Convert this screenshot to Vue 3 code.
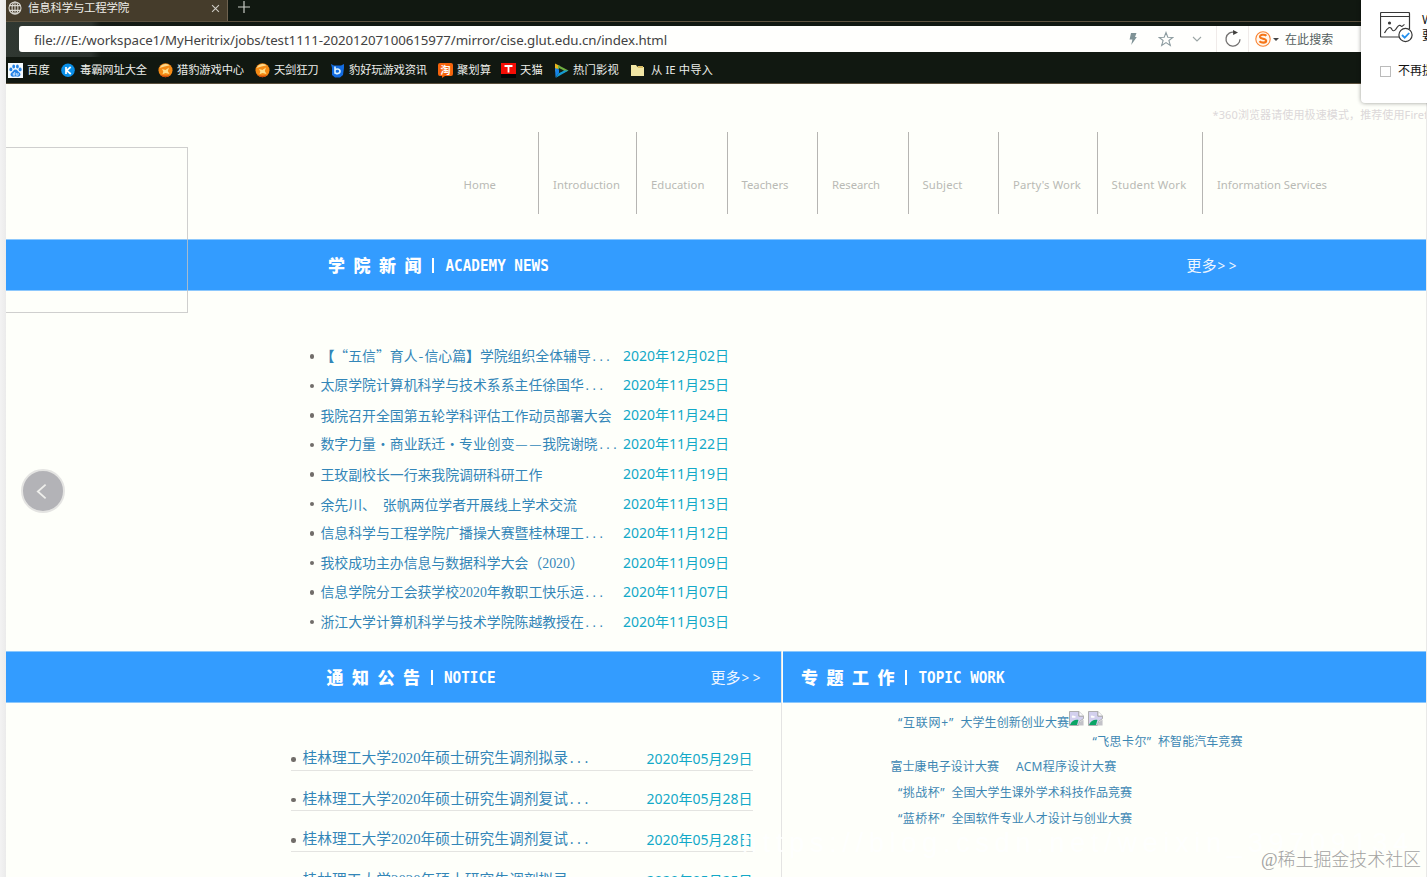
<script setup>
// Spreads a line of text over a given width by adjusting its letter spacing.
const vFit = {
  mounted(el, { value }) {
    if (!value) return
    const natural = el.getBoundingClientRect().width
    const n = [...el.textContent].length
    el.style.letterSpacing = (value - natural) / n + 'px'
  }
}

const bookmarks = [
  { icon: 'baidu', label: '百度', w: 53, t: 23 },
  { icon: 'k', label: '毒霸网址大全', w: 97, t: 67 },
  { icon: 'ball', label: '猎豹游戏中心', w: 97, t: 67 },
  { icon: 'ball', label: '天剑狂刀', w: 75, t: 44.5 },
  { icon: 'b', label: '豹好玩游戏资讯', w: 108, t: 78 },
  { icon: 'tao', label: '聚划算', w: 63, t: 34 },
  { icon: 't', label: '天猫', w: 53, t: 23 },
  { icon: 'play', label: '热门影视', w: 76, t: 46 },
  { icon: 'folder', label: '从 IE 中导入', w: 100, t: 62 }
]

const nav = [
  { label: 'Home', w: 90, t: 32.5 },
  { label: 'Introduction', w: 98, t: 67 },
  { label: 'Education', w: 90.5, t: 53.5 },
  { label: 'Teachers', w: 90.5, t: 47 },
  { label: 'Research', w: 90.5, t: 48 },
  { label: 'Subject', w: 90.5, t: 40 },
  { label: 'Party\'s Work', w: 98.5, t: 68 },
  { label: 'Student Work', w: 105.5, t: 75 },
  { label: 'Information Services', w: 150, t: 110 }
]

// Splits a headline into runs, each with the class that sets its width.
const kind = (t) => {
  if (/^[0-9]/.test(t)) return 'num'
  if (t[0] === '.') return 'dots'
  if (t === '·' || t === '—') return 'mid'
  if (t === '“') return 'open'
  if (t === '”') return 'shut'
  if (t === '-' || t === ' ') return 'half'
  if (t === '【' || t === '】') return 'han strong'
  return 'han'
}
const runs = (s) =>
  (s.match(/[0-9]+|\.+|[·\- —“”【】]|[^0-9.·\- —“”【】]+/g) || []).map((t) => ({ t, c: kind(t) }))

const news = [
  ['【“五信”育人-信心篇】学院组织全体辅导...', '2020年12月02日'],
  ['太原学院计算机科学与技术系系主任徐国华...', '2020年11月25日'],
  ['我院召开全国第五轮学科评估工作动员部署大会', '2020年11月24日'],
  ['数字力量·商业跃迁·专业创变——我院谢晓...', '2020年11月22日'],
  ['王玫副校长一行来我院调研科研工作', '2020年11月19日'],
  ['余先川、 张帆两位学者开展线上学术交流', '2020年11月13日'],
  ['信息科学与工程学院广播操大赛暨桂林理工...', '2020年11月12日'],
  ['我校成功主办信息与数据科学大会（2020）', '2020年11月09日'],
  ['信息学院分工会获学校2020年教职工快乐运...', '2020年11月07日'],
  ['浙江大学计算机科学与技术学院陈越教授在...', '2020年11月03日']
].map(([title, date]) => ({ runs: runs(title), date }))

const notices = [
  ['桂林理工大学2020年硕士研究生调剂拟录...', '2020年05月29日'],
  ['桂林理工大学2020年硕士研究生调剂复试...', '2020年05月28日'],
  ['桂林理工大学2020年硕士研究生调剂复试...', '2020年05月28日'],
  ['桂林理工大学2020年硕士研究生调剂拟录...', '2020年05月25日']
].map(([title, date]) => ({ runs: runs(title), date }))
</script>

<template>
  <div class="screen">
    <div class="gutter"></div>
    <div class="window">
      <div class="tabs">
        <div class="tab">
          <svg class="globe" viewBox="0 0 14 14" fill="none" stroke="#d8d6cf" stroke-width="1.1">
            <circle cx="7" cy="7" r="6" /><ellipse cx="7" cy="7" rx="2.9" ry="6" />
            <path d="M1.5 4.6h11M1.5 9.4h11M7 1v12" />
          </svg>
          <span class="tab-title"><span v-fit="101">信息科学与工程学院</span></span>
          <svg class="close" viewBox="0 0 10 10" stroke="#d0cdc6" stroke-width="1.2"><path d="M1.2 1.2l7.6 7.6M8.8 1.2L1.2 8.8" /></svg>
        </div>
        <svg class="plus" viewBox="0 0 12 12" stroke="#c9cbc6" stroke-width="1.2"><path d="M6 0v12M0 6h12" /></svg>
      </div>
      <div class="toolbar">
        <div class="address">
          <span class="url"><span v-fit="633">file:///E:/workspace1/MyHeritrix/jobs/test1111-20201207100615977/mirror/cise.glut.edu.cn/index.html</span></span>
          <div class="tools">
            <svg class="bolt" viewBox="0 0 8 12"><path d="M2 0h5.5L6 4h1.8L2.2 12 3.4 6.6H.6z" fill="#7f9296" /></svg>
            <svg class="star" viewBox="0 0 16 16" fill="none" stroke="#8d9ca0" stroke-width="1.1"><path d="M8 1.5l1.8 4.7 5 .2-3.9 3.1 1.4 4.9L8 11.6l-4.3 2.8 1.4-4.9L1.2 6.4l5-.2z" /></svg>
            <svg class="chev" viewBox="0 0 10 6" fill="none" stroke="#9ba5a5" stroke-width="1.1"><path d="M1 1l4 4 4-4" /></svg>
            <div class="reload">
              <svg viewBox="0 0 18 18"><path d="M10.8 2.3A7 7 0 1 0 16 9.2" fill="none" stroke="#72706f" stroke-width="1.3" /><path d="M9 0l5 2.6L9.2 5z" fill="#403f3c" /></svg>
            </div>
            <svg class="sogou" viewBox="0 0 16 16"><circle cx="8" cy="8" r="7.2" fill="#fff7ed" stroke="#fa8230" stroke-width="1.1" /><path d="M11.4 4.8C9.8 3.2 4.6 3.4 5 6c.4 2 6.2 1.5 6.2 3.8 0 2.5-5.1 2.2-6.8.5" fill="none" stroke="#f57518" stroke-width="2.1" /></svg>
            <i class="caret"></i>
            <span class="search"><span v-fit="48.5">在此搜索</span></span>
          </div>
        </div>
      </div>
      <div class="bookmarks">
        <div v-for="b in bookmarks" :key="b.label" class="bookmark" :style="{ width: b.w + 'px' }">
          <svg v-if="b.icon === 'baidu'" viewBox="0 0 15 15"><path fill="#f5fbff" d="M0 0h15v15H0z" /><g fill="#2584e8"><ellipse cx="2.9" cy="6.4" rx="1.5" ry="1.9" /><ellipse cx="5.7" cy="3.5" rx="1.4" ry="2" /><ellipse cx="9.4" cy="3.5" rx="1.4" ry="2" /><ellipse cx="12.1" cy="6.4" rx="1.5" ry="1.9" /><path d="M7.5 6.4c2 0 2.6 2 4 3.2 1.9 1.7.8 4.4-1.5 4.2-1.7-.3-3.3-.3-5 0-2.3.2-3.4-2.5-1.5-4.2 1.4-1.2 2-3.200 4-3.200z" /></g><path d="M5.300 10v2.200h1.400V9M8.300 10v2.200h1.800V10" fill="none" stroke="#eaf6ff" stroke-width=".8" /></svg>
          <svg v-else-if="b.icon === 'k'" viewBox="0 0 15 15"><circle cx="7" cy="7.300" r="6.800" fill="#0a8fe8" /><path d="M5 4v7M9.700 4L5.600 7.500l4.200 3.500" fill="none" stroke="#fff" stroke-width="1.700" /></svg>
          <svg v-else-if="b.icon === 'ball'" viewBox="0 0 15 15"><circle cx="7.500" cy="7.300" r="7" fill="#f58a14" /><path d="M1.500 5a6.500 6.500 0 0 1 10-2.500C8 3 5 4 1.500 5z" fill="#ffd88a" /><path d="M4 6l3.500 1L11 4.500 9.800 8l1.700 3-4-1-3 1.200.8-2.700z" fill="#ffe08c" /><path d="M2 11.500a7 7 0 0 0 10.500.5c-3.500 1.200-7 1-10.500-.5z" fill="#c9460c" /></svg>
          <svg v-else-if="b.icon === 'b'" viewBox="0 0 15 15"><path d="M1 1l3 1.500h7L14 1v4l-1 7-3 2.500H5L2 12V5z" fill="#126be0" /><path d="M5 3.500v7.300M5 7.500c0-2.200 5-2.200 5 .8s-5 3-5 .6" fill="none" stroke="#d9f2ff" stroke-width="1.600" /></svg>
          <svg v-else-if="b.icon === 'tao'" viewBox="0 0 15 15"><path d="M2 0h11q2 0 2 2v9q0 2-2 2H7l-3 2v-2H2q-2 0-2-2V2q0-2 2-2z" fill="#f4630c" /><text x="7.500" y="10.800" text-anchor="middle" class="tao">淘</text></svg>
          <svg v-else-if="b.icon === 't'" viewBox="0 0 15 15"><path d="M0 0h15v11H0z" fill="#f50d05" /><path d="M0 11h15v4H0z" fill="#050505" /><path d="M3.500 3h8M7.500 3v6.500" stroke="#fff" stroke-width="1.800" /></svg>
          <svg v-else-if="b.icon === 'play'" viewBox="0 0 15 15"><path d="M1 .5l5 2.500L1 9z" fill="#e7b51f" /><path d="M4 2l10.500 5.500-4 2L4 6z" fill="#6fb040" /><path d="M1 5l4 1.500V10l-3.500 4.500z" fill="#1683e7" /><path d="M14.500 7.500L1.500 15 5 9.800l5-2.300z" fill="#159ad1" /><path d="M5 5l5 2.600L5 10z" fill="#132016" /></svg>
          <svg v-else viewBox="0 0 15 15"><path d="M1 2h5l1.500 2H14v9H1z" fill="#f1e6a4" /><path d="M7.500 3H13v2H8z" fill="#d9bc63" /></svg>
          <span v-fit="b.t">{{ b.label }}</span>
        </div>
      </div>

      <div class="page">
        <header>
          <div class="note"><span v-fit="228">*360浏览器请使用极速模式，推荐使用Firefox</span></div>
          <nav>
            <a v-for="n in nav" :key="n.label" :style="{ width: n.w + 'px' }"><span v-fit="n.t">{{ n.label }}</span></a>
          </nav>
        </header>
        <div class="bar bar-news">
          <h2><b>学</b><b>院</b><b>新</b><b>闻</b><i></i><em>ACADEMY NEWS</em></h2>
          <a class="more">更多<small>&gt;&gt;</small></a>
        </div>
        <ul class="news">
          <li v-for="(n, i) in news" :key="i">
            <span class="dot"></span>
            <span class="title"><span v-for="(r, j) in n.runs" :key="j" :class="r.c">{{ r.t }}</span></span>
            <time>{{ n.date }}</time>
          </li>
        </ul>
        <div class="columns">
          <section class="notice">
            <div class="bar">
              <h2><b>通</b><b>知</b><b>公</b><b>告</b><i></i><em>NOTICE</em></h2>
              <a class="more">更多<small>&gt;&gt;</small></a>
            </div>
            <ul>
              <li v-for="(n, i) in notices" :key="i">
                <span class="dot"></span>
                <span class="title"><span v-for="(r, j) in n.runs" :key="j" :class="r.c">{{ r.t }}</span></span>
                <time>{{ n.date }}</time>
              </li>
            </ul>
          </section>
          <section class="topic">
            <div class="bar">
              <h2><b>专</b><b>题</b><b>工</b><b>作</b><i></i><em>TOPIC WORK</em></h2>
            </div>
            <div class="links">
              <p class="first">
                <a v-fit="56">“互联网+”</a><a class="gap" v-fit="108.5">大学生创新创业大赛</a>
                <svg v-for="k in 2" :key="k" class="broken" viewBox="0 0 16 16"><path d="M.5.5h10l5 5V8l-4 3-1.500 4.500H.5z" fill="#d3d0ee" stroke="#a9a9a9" /><path d="M10.500.5v5h5" fill="#fff" stroke="#999" /><path d="M3 6.500c0-2 2-2 2.500-1 1.500-.5 2.500 1 1 1.700H3.500z" fill="#fff" /><path d="M1 15c2-4.500 5-6 9-5.500L8.500 15z" fill="#0aa565" /><path d="M10.500 15.500l1-3.500 4-3v6.500z" fill="#c3c3c8" /></svg>
              </p>
              <p class="second"><a v-fit="59">“飞思卡尔”</a><a class="gap" v-fit="84.5">杯智能汽车竞赛</a></p>
              <p class="third"><a v-fit="108.5">富士康电子设计大赛</a><a class="wide-gap" v-fit="100.5">ACM程序设计大赛</a></p>
              <p class="fourth"><a v-fit="47">“挑战杯”</a><a class="gap" v-fit="180.5">全国大学生课外学术科技作品竞赛</a></p>
              <p class="fourth"><a v-fit="47">“蓝桥杯”</a><a class="gap" v-fit="180.5">全国软件专业人才设计与创业大赛</a></p>
            </div>
          </section>
        </div>
      </div>
    </div>

    <div class="frame"></div>
    <div class="prev"><svg viewBox="0 0 12 18" fill="none" stroke="#eeeeeb" stroke-width="2"><path d="M10.500 1.500L2 9l8.500 7.500" /></svg></div>
    <div class="popup">
      <div class="popup-row">
        <svg viewBox="0 0 33 31" fill="none" stroke="#383838" stroke-width="1.2"><path d="M19 25H1.500q-1 0-1-1V1.500q0-1 1-1h27q1 0 1 1V17M.5 4.500h29" /><circle cx="9.500" cy="11" r="1.600" fill="#383838" stroke="none" /><path d="M4.500 21c3-6 6-7 7.500-3.500 1.500 3 4 0 5-2 1-2 3-3 4-1.500 1 1.500 2-1 3.500-1.500" /><circle cx="25.500" cy="23" r="6.600" fill="#fff" /><path d="M22 23l2.700 2.700 4.500-4.700" stroke="#2490ef" stroke-width="1.800" /></svg>
        <div class="popup-text">W<br />要</div>
      </div>
      <div class="popup-check"><i></i><span>不再提示</span></div>
    </div>
    <div class="credit-faint"><span v-fit="672">https://blog.csdn.net/weixin_39709134</span></div>
    <div class="credit"><span v-fit="160">@稀土掘金技术社区</span></div>
  </div>
</template>

<style>
body { margin: 0; overflow: hidden; }
</style>

<style scoped>
* { box-sizing: border-box; }
.screen {
  position: relative; display: flex; width: 1427px; height: 877px; overflow: hidden;
  background: #fefffa; font-family: "Noto Sans", "Noto Sans CJK SC", sans-serif; white-space: nowrap;
}
.gutter { width: 6px; flex: none; background: linear-gradient(90deg, #f3f3f3, #ebebeb); }
.window { flex: 1; min-width: 0; display: flex; flex-direction: column; border-right: 1px solid #e9e9e7; }
svg { display: block; flex: none; }

.tabs { height: 22px; display: flex; background: #111811; border-bottom: 1px solid #5d523f; }
.tab { width: 222px; background: #453c2b; display: flex; align-items: center; padding: 0 7px 5px 2px; border-right: 1px solid #6e6250; }
.globe { width: 14px; height: 14px; }
.tab-title { flex: 1; margin-left: 6px; font-size: 11.5px; line-height: 18px; color: #efeee9; }
.close { width: 9px; height: 9px; }
.plus { width: 12px; height: 12px; margin: 1px 0 0 10px; }
.toolbar { height: 35px; padding: 4px 0 0 13px; background: linear-gradient(90deg, #303832 0, #2a312c 85px, #141b15 95px, #111811 300px); }
.address { height: 26px; display: flex; align-items: center; background: #fffffd; border-radius: 3px 0 0 3px; padding-left: 15px; }
.url { flex: 1; font-size: 13.3px; line-height: 26px; padding-top: 1px; color: #424242; }
.tools { width: 297px; height: 26px; display: flex; align-items: center; }
.bolt { width: 8px; height: 12px; }
.star { width: 16px; height: 16px; margin-left: 21px; }
.chev { width: 10px; height: 6px; margin-left: 18px; }
.reload { margin-left: 14px; width: 33px; height: 26px; display: flex; align-items: center; justify-content: center; border: solid #f0ebe9; border-width: 0 1px; }
.reload svg { width: 18px; height: 18px; }
.sogou { width: 16px; height: 16px; margin-left: 6px; }
.caret { border: 3px solid transparent; border-top: 3px solid #444; border-bottom: 0; margin: 0 6px 0 2px; }
.search { font-size: 12px; color: #555f60; }
.bookmarks { height: 27px; display: flex; align-items: center; padding-left: 2px; background: #111811; border-bottom: 1px solid #5b503c; color: #eceeea; font-size: 11.3px; line-height: 20px; }
.bookmark { flex: none; display: flex; align-items: center; gap: 4px; }
.bookmark svg { width: 15px; height: 15px; }
.bookmark:last-child { gap: 6px; }
.tao { font: bold 10px "Noto Sans CJK SC", sans-serif; fill: #fff; }

.page { flex: 1; min-height: 0; }
header { height: 155px; }
.note { height: 48px; padding: 22px 0 0 1206.5px; overflow: hidden; font-size: 11px; line-height: 18px; color: #dcd8d9; }
nav { display: flex; padding-left: 442px; }
nav a { flex: none; height: 82px; padding: 43px 0 0 14px; font-size: 11.3px; line-height: 20px; color: #b9bab5; border-left: 1.5px solid #b6b5b2; }
nav a:first-child { border-left-color: transparent; }
nav a:first-child { padding-left: 14.5px; }

.bar { height: 52px; display: flex; align-items: center; background: #339cff; border: solid #8cc8fd; border-width: 1px 0; color: #fff; }
.bar-news { padding: 0 186px 0 322px; }
h2 { flex: 1; display: flex; align-items: center; margin: 0; font: bold 17px/24px "Noto Sans CJK SC", sans-serif; }
h2 b { width: 25.5px; }
h2 i { width: 2px; height: 15px; background: #fff; margin: 0 11.5px 0 2px; }
h2 em { font: bold 14.3px/24px "DejaVu Sans Mono", monospace; transform: scaleY(1.12); }
.more { display: flex; align-items: center; font-size: 15px; line-height: 24px; color: #eef6ff; }
.more small { font: 13.5px/24px "Noto Sans", sans-serif; letter-spacing: 3.5px; margin: 1px 0 0 1px; }

ul { list-style: none; margin: 0; padding: 0; }
li { display: flex; align-items: center; }
.dot { flex: none; width: 4.5px; height: 4.5px; margin-top: 1px; border-radius: 50%; background: #716d69; }
.title { flex: none; font-family: "Noto Sans CJK SC", sans-serif; font-weight: 400; color: #3386b8; display: flex; align-items: baseline; }
.num { font-family: "Liberation Serif", serif; }
.dots { font-family: "Liberation Mono", monospace; font-size: .8333em; }
.mid, .open, .shut { width: 1em; text-align: center; overflow: hidden; }
.open { text-align: right; }
.shut { text-align: left; }
.half { width: .5em; text-align: center; white-space: pre; }
.strong { font-weight: 900; }
time { font: 14px/24px "Noto Sans", "Noto Sans CJK SC", sans-serif; color: #12a9c8; }
.news { height: 360px; padding: 50px 0 0 303.5px; }
.news li { height: 29.56px; }
.news .title { width: 309px; padding: 1px 0 0 6.5px; font-size: 13.86px; line-height: 24px; }

.columns { display: flex; height: 226px; }
.notice { width: 775.5px; flex: none; border-right: 1px solid #e4e4e3; }
.notice .bar { padding: 0 16.5px 0 320.5px; }
.notice ul { padding: 27px 28px 0 285px; }
.notice li { height: 40.6px; padding-top: 18px; border-bottom: 1px solid #e4e4e1; }
.notice .title { flex: 1; padding-left: 7px; font-size: 14.76px; line-height: 22px; }
.topic { flex: 1; border-left: 1px solid #fefffa; }
.topic .bar { padding-left: 18.5px; }
.links { font-size: 12px; color: #3d87b3; }
.links p { margin: 0; display: flex; align-items: center; height: 25.8px; }
.links a { flex: none; }
.links .first { height: 28px; padding: 9px 0 0 115.5px; }
.gap { margin-left: 6.5px; }
.broken { width: 15px; height: 15px; margin: -7px 4px 0 0; }
.links .second { height: 19px; padding-left: 310px; margin-bottom: 3.5px; }
.third { padding-left: 108px; }
.wide-gap { margin-left: 17px; }
.fourth { padding-left: 115.5px; }

.frame { position: absolute; left: 6px; top: 147px; width: 182px; height: 166px; border: 1px solid rgba(195, 195, 195, .8); border-left: 0; }
.prev { position: absolute; left: 21px; top: 469px; width: 44px; height: 44px; border-radius: 50%; background: #b3b3b7; border: 2px solid #e4e4e2; display: flex; align-items: center; justify-content: center; padding-right: 3px; }
.prev svg { width: 11px; height: 17px; }
.popup { position: absolute; left: 1361px; top: 0; width: 100px; height: 103px; background: #fff; border-radius: 0 0 0 4px; box-shadow: 0 0 4px rgba(0, 0, 0, .4); padding: 12px 0 0 19px; font-size: 12px; color: #111; }
.popup-row { display: flex; height: 49px; }
.popup-row svg { width: 33px; height: 31px; }
.popup-text { margin-left: 9px; line-height: 16px; }
.popup-check { display: flex; align-items: center; line-height: 20px; }
.popup-check i { width: 11px; height: 11px; border: 1px solid #bbb; margin-right: 7px; }
.credit-faint { position: absolute; left: 742px; top: 825px; font: 27px/36px "Liberation Sans", sans-serif; color: rgba(255, 255, 255, .9); }
.credit { position: absolute; left: 1261px; top: 847px; font: 300 18px/26px "Liberation Serif", "Noto Sans CJK SC", serif; color: #a3a3a1; text-shadow: 0 0 1px #fff; }
</style>
